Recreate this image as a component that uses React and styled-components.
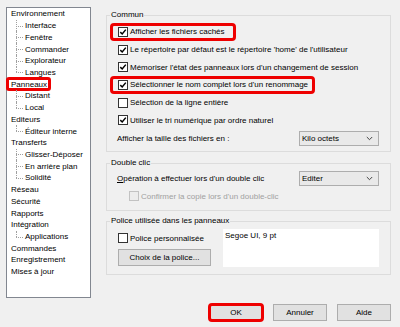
import React from 'react';
import styled, { createGlobalStyle, css } from 'styled-components';

const RED = '#ee0000';

const GlobalStyle = createGlobalStyle`
  html, body {
    margin: 0;
    background: #f0f0f0;
  }
  body {
    font-family: "Liberation Sans", Arial, sans-serif;
    font-size: 8px;
    color: #000;
  }
  #root {
    width: 400px;
    height: 327px;
    overflow: hidden;
  }
`;

const Window = styled.div`
  display: flex;
  height: 327px;
  box-sizing: border-box;
  padding: 7px 9px 0 6px;
`;

// arbre de navigation à gauche
const Tree = styled.ul`
  list-style: none;
  margin: 0;
  padding: 0 0 0 4px;
  width: 85px;
  height: 291px;
  flex: none;
  box-sizing: border-box;
  background: #fff;
  border: 1px solid #828790;
`;

const Children = styled.ul`
  list-style: none;
  margin: 0 0 0 5px;
  padding: 0;
`;

const Child = styled.li`
  position: relative;
  padding-left: 9px;

  &::before {
    content: '';
    position: absolute;
    left: 0;
    top: 0;
    height: ${p => (p.$last ? '50%' : '100%')};
    border-left: 1px dotted #a0a0a0;
  }
  &::after {
    content: '';
    position: absolute;
    left: 0;
    top: 50%;
    width: 7px;
    border-top: 1px dotted #a0a0a0;
  }
`;

const NodeLabel = styled.div`
  display: flex;
  align-items: center;
  height: 11.73px;
  white-space: nowrap;
`;

const NodeText = styled.span`
  ${p => p.$highlight && css`
    display: flex;
    align-items: center;
    height: 14px;
    box-sizing: border-box;
    border: 3px solid ${RED};
    border-radius: 3px;
    margin: 0 -4px 0 -5px;
    padding: 0 1px 0 2px;
  `}
`;

// panneau de droite
const Panel = styled.div`
  display: flex;
  flex-direction: column;
  width: 285px;
  margin: 2px 0 0 15px;
`;

const Group = styled.fieldset`
  margin: ${p => p.$gap || 0}px 0 0;
  padding: 0;
  min-width: 0;
  border: 1px solid #dcdcdc;
`;

const Legend = styled.legend`
  margin-left: 3px;
  padding: 0 1px;
  height: 12px;
  line-height: 12px;
`;

const GroupBody = styled.div`
  display: flex;
  flex-direction: ${p => (p.$row ? 'row' : 'column')};
  justify-content: ${p => (p.$row ? 'space-between' : 'flex-start')};
  padding: ${p => p.$pad};
`;

const CheckRow = styled.div`
  display: flex;
  align-items: center;
  align-self: flex-start;
  height: 17.7px;
  box-sizing: border-box;
  white-space: nowrap;
  color: ${p => (p.$disabled ? '#a0a0a0' : '#000')};
  margin-left: ${p => p.$indent || 0}px;
  margin-top: ${p => p.$top || 0}px;
  ${p => p.$highlight && css`
    border: 3px solid ${RED};
    border-radius: 4px;
    margin-left: -8px;
    padding: 0 ${p.$hlRight}px 0 5px;
  `}
`;

const Box = styled.span`
  display: flex;
  align-items: center;
  justify-content: center;
  flex: none;
  width: 10px;
  height: 10px;
  box-sizing: border-box;
  margin-right: 2px;
  border: 1px solid ${p => (p.$disabled ? '#c2c2c2' : '#333')};
  background: ${p => (p.$disabled ? '#ececec' : '#fff')};
`;

const FieldRow = styled.div`
  display: flex;
  align-items: center;
  justify-content: space-between;
  height: 15px;
  margin-top: ${p => p.$top || 0}px;
`;

const FieldLabel = styled.span`
  margin-left: -1px;
`;

const Combo = styled.div`
  display: flex;
  align-items: center;
  justify-content: space-between;
  width: 80px;
  height: 15px;
  box-sizing: border-box;
  padding: 0 5px 0 2px;
  border: 1px solid #adadad;
  background: #e9e9e9;
`;

const Column = styled.div`
  display: flex;
  flex-direction: column;
`;

const Preview = styled.div`
  width: 156px;
  height: 38px;
  box-sizing: border-box;
  padding: 1px 2px;
  line-height: 12px;
  background: #fff;
`;

const Button = styled.button`
  font: inherit;
  color: #000;
  width: ${p => p.$w}px;
  height: 17px;
  margin-top: ${p => p.$top || 0}px;
  padding: 0;
  background: #e1e1e1;
  border: 1px solid #adadad;
  border-radius: 0;
  ${p => p.$highlight && css`
    outline: 3px solid ${RED};
    outline-offset: -2px;
    border-radius: 3px;
  `}
`;

const Actions = styled.div`
  display: flex;
  justify-content: flex-end;
  gap: 10px;
  margin-top: 29px;
`;

const tree = [
  { label: 'Environnement', children: ['Interface', 'Fenêtre', 'Commander', 'Explorateur', 'Langues'] },
  { label: 'Panneaux', highlight: true, children: ['Distant', 'Local'] },
  { label: 'Editeurs', children: ['Éditeur interne'] },
  { label: 'Transferts', children: ['Glisser-Déposer', 'En arrière plan', 'Solidité'] },
  { label: 'Réseau' },
  { label: 'Sécurité' },
  { label: 'Rapports' },
  { label: 'Intégration', children: ['Applications'] },
  { label: 'Commandes' },
  { label: 'Enregistrement' },
  { label: 'Mises à jour' },
];

const commun = [
  { text: 'Afficher les fichiers cachés', checked: true, highlight: true, hlRight: 8 },
  { text: "Le répertoire par défaut est le répertoire 'home' de l'utilisateur", checked: true },
  { text: "Mémoriser l'état des panneaux lors d'un changement de session", checked: true },
  { text: "Sélectionner le nom complet lors d'un renommage", checked: true, highlight: true, hlRight: 4 },
  { text: 'Sélection de la ligne entière', checked: false },
  { text: 'Utiliser le tri numérique par ordre naturel', checked: true },
];

const Check = ({ checked, disabled }) => (
  <Box $disabled={disabled}>
    {checked && (
      <svg width="8" height="8" viewBox="0 0 8 8">
        <path d="M1.3 4.1 L3.2 6 L6.8 1.6" fill="none" stroke="#000" strokeWidth="1.5" />
      </svg>
    )}
  </Box>
);

const Chevron = () => (
  <svg width="7" height="5" viewBox="0 0 7 5">
    <path d="M0.8 1 L3.5 3.7 L6.2 1" fill="none" stroke="#444" strokeWidth="1" />
  </svg>
);

const App = () => (
  <>
    <GlobalStyle />
    <Window>
      <Tree>
        {tree.map(node => (
          <li key={node.label}>
            <NodeLabel>
              <NodeText $highlight={node.highlight}>{node.label}</NodeText>
            </NodeLabel>
            {node.children && (
              <Children>
                {node.children.map((c, i) => (
                  <Child key={c} $last={i === node.children.length - 1}>
                    <NodeLabel>{c}</NodeLabel>
                  </Child>
                ))}
              </Children>
            )}
          </li>
        ))}
      </Tree>

      <Panel>
        <Group>
          <Legend>Commun</Legend>
          <GroupBody $pad="2px 11px 5px 11px">
            {commun.map(opt => (
              <CheckRow key={opt.text} $highlight={opt.highlight} $hlRight={opt.hlRight}>
                <Check checked={opt.checked} />
                {opt.text}
              </CheckRow>
            ))}
            <FieldRow $top={2}>
              <FieldLabel>Afficher la taille des fichiers en :</FieldLabel>
              <Combo>
                Kilo octets
                <Chevron />
              </Combo>
            </FieldRow>
          </GroupBody>
        </Group>

        <Group $gap={5}>
          <Legend>Double clic</Legend>
          <GroupBody $pad="2px 11px 5px 11px">
            <FieldRow>
              <FieldLabel><u>O</u>pération à effectuer lors d'un double clic</FieldLabel>
              <Combo>
                Editer
                <Chevron />
              </Combo>
            </FieldRow>
            <CheckRow $disabled $indent={11} $top={1.5}>
              <Check disabled />
              Confirmer la copie lors d'un double-clic
            </CheckRow>
          </GroupBody>
        </Group>

        <Group $gap={4}>
          <Legend>Police utilisée dans les panneaux</Legend>
          <GroupBody $row $pad="2px 11px 7px 11px">
            <Column>
              <CheckRow>
                <Check />
                Police personnalisée
              </CheckRow>
              <Button $w={93} $top={2}>Choix de la police...</Button>
            </Column>
            <Preview>Segoe UI, 9 pt</Preview>
          </GroupBody>
        </Group>

        <Actions>
          <Button $w={54} $highlight>OK</Button>
          <Button $w={54}>Annuler</Button>
          <Button $w={54}>Aide</Button>
        </Actions>
      </Panel>
    </Window>
  </>
);

export default App;
